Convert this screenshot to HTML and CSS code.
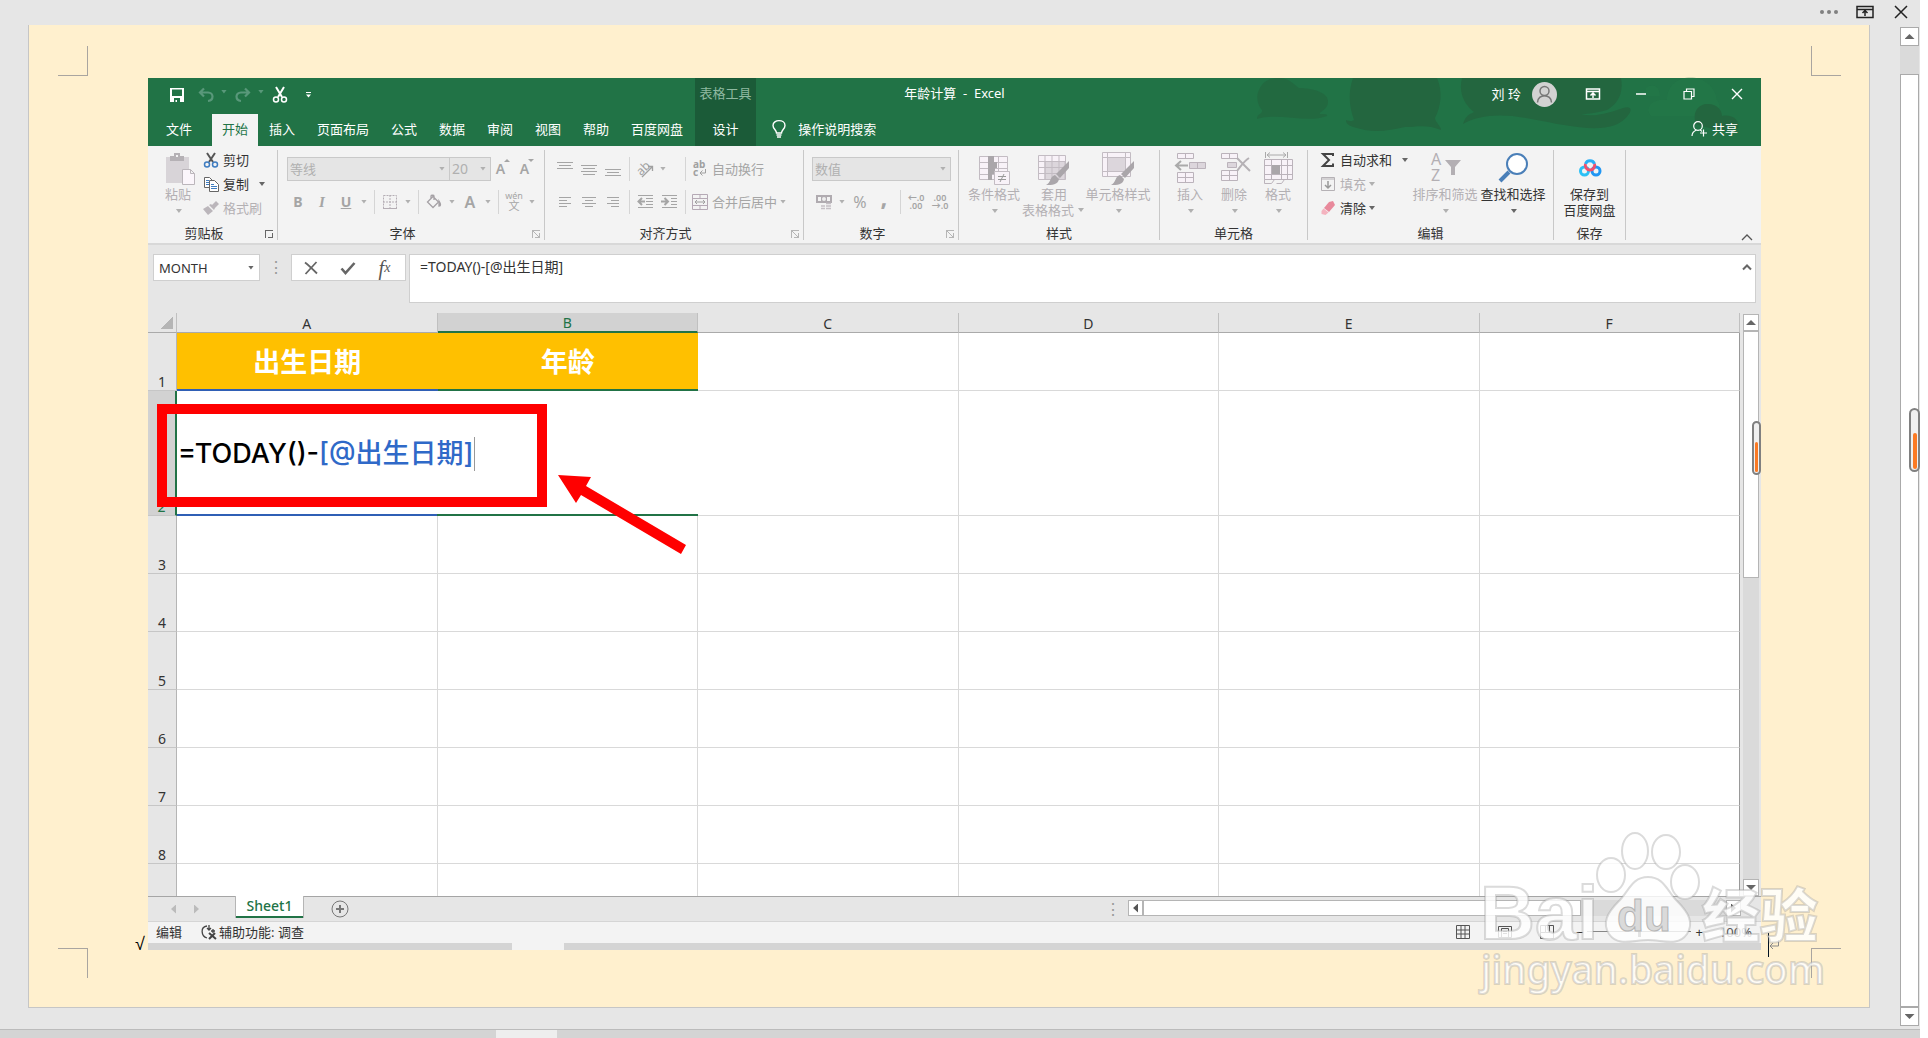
FILE: index.html
```
<!DOCTYPE html>
<html lang="zh-CN">
<head>
  <meta charset="UTF-8" />
  <meta name="viewport" content="width=device-width, initial-scale=1.0"/>
  <title>年龄计算 - Excel</title>
  <link rel="stylesheet" href="styles.css">
</head>
<body>
<div class="reader">

  <div class="reader-top">
    <button aria-label="更多"><svg width="20" height="20"><g fill="#808080"><circle cx="3" cy="10" r="2"/><circle cx="10" cy="10" r="2"/><circle cx="17" cy="10" r="2"/></g></svg></button>
    <button aria-label="功能区显示选项"><svg width="20" height="20" fill="none" stroke="#222" stroke-width="1.5"><path d="M2 4.5h16v11H2zM2 7.5h16M10 14V9M7.500 11L10 8.500l2.500 2.500"/></svg></button>
    <button aria-label="关闭"><svg width="20" height="20" stroke="#222" stroke-width="1.500"><path d="M4 4l12 12M16 4L4 16"/></svg></button>
  </div>

  <div class="reader-body">
    <div class="paper">
      <div class="marks left"><i class="mark tl"></i><i class="mark bl"></i></div>
      <div class="doc">
        <span class="check">√</span>

        <div class="excel">
          <header class="head">
            <svg class="clouds" width="520" height="68" viewBox="0 0 520 68">
              <g fill="#257b4b" opacity=".35"><path d="M426 22c0-30 46-30 50 0 8 12-4 20-16 16h-50c-8-10 4-18 16-16zM405 10c8-6 14 0 14 8h-14z"/></g>
              <g fill="#23663f">
                <path d="M18 12C22 2 30 0 38 0c10 0 14 6 20 10 12 0 30 4 29 14 0 8-10 10-8 12 4 0 8 0 7 2-20 8-48-4-70 3 0-5 6-5 5-9-5-6-6-14-3-20z" opacity=".75"/>
                <path d="M112 0h84c6 14 4 28-2 40 0 4 6 8 6 12-14-6-24-3-36-3-16 4-34 6-48 1-8-2-11-4-11-8 4 1 6 2 8 0-5-14-6-28-1-42z"/>
                <path d="M221 0h159c3 16-4 26-14 32-14 4-22 4-26 4 14 4 30-2 42-6 6-2 10 0 6 6-16 24-58 12-98 5-30-6-52-4-68 5 2-6 4-9 11-12-12-9-15-22-12-34z"/>
                <path d="M455 46c-4-12 2-20 12-20s14 7 14 12c10-2 18 4 16 12-12 6-30 0-42-4z"/>
              </g>
            </svg>

            <div class="titlebar">
              <div class="quick">
                <button class="first" aria-label="保存"><svg width="16" height="16"><path fill="#fff" fill-rule="evenodd" d="M1 1h14v14H1zM3 2.500h10V9H3zM5 11v4h1.500v-2H8v2h3v-4z"/></svg></button>
                <button aria-label="撤消"><svg width="16" height="16" fill="none" stroke="#59987a" stroke-width="2.200"><path d="M6 1.500L2 5.500l4 4M2.500 5.500H10c6 0 6 8 0 8.500"/></svg></button><i class="caret dim"></i>
                <button aria-label="恢复"><svg width="16" height="16" fill="none" stroke="#59987a" stroke-width="2.200"><path d="M10 1.500l4 4-4 4M13.500 5.500H6c-6 0-6 8 0 8.500"/></svg></button><i class="caret dim"></i>
                <button aria-label="剪切"><svg width="16" height="16" fill="none" stroke="#fff" stroke-width="1.500"><path stroke-width="2" d="M4 0l6 10M12 0L6 10"/><circle cx="4" cy="12.500" r="2.500"/><circle cx="12" cy="12.500" r="2.500"/></svg></button>
                <button class="more" aria-label="自定义"><svg width="8" height="8" fill="#fff"><path d="M2 1h5v1H2zM2 3.500h5L4.500 6.500z"/></svg></button>
              </div>
              <span class="context">表格工具</span>
              <span class="title">年龄计算&nbsp; -&nbsp; Excel</span>
              <div class="account">
                <span>刘 玲</span>
                <svg class="avatar" width="25" height="25" fill="none" stroke="#777" stroke-width="1.500"><circle cx="12.500" cy="12.500" r="12.500" fill="#d2d2d2" stroke="none"/><circle cx="12.500" cy="9" r="4.500"/><path d="M5.500 20.500c0-9 14-9 14 0"/></svg>
                <button class="win" aria-label="功能区"><svg width="16" height="16" fill="none" stroke="#fff" stroke-width="1.500"><path d="M1.500 3h13v10h-13zM1.500 5.500h13M8 12V7.500M5.500 9.500L8 7l2.500 2.500"/></svg></button>
                <button class="win" aria-label="最小化"><svg width="12" height="12"><path stroke="#fff" stroke-width="1.500" d="M1 6h10"/></svg></button>
                <button class="win" aria-label="还原"><svg width="12" height="12" fill="none" stroke="#fff" stroke-width="1.200"><path d="M1 3.500h7.500V11H1zM3.500 3.500V1H11v7.500H8.500"/></svg></button>
                <button class="win" aria-label="关闭"><svg width="12" height="12" stroke="#fff" stroke-width="1.400"><path d="M1 1l10 10M11 1L1 11"/></svg></button>
              </div>
            </div>

            <nav class="tabs">
              <button class="file">文件</button>
              <button class="active">开始</button>
              <button>插入</button>
              <button>页面布局</button>
              <button>公式</button>
              <button>数据</button>
              <button>审阅</button>
              <button>视图</button>
              <button>帮助</button>
              <button>百度网盘</button>
              <button class="design">设计</button>
              <button class="tell"><svg width="14" height="18" fill="none" stroke="#fff" stroke-width="1.400"><path d="M4.500 13c0-3-3.500-4-3.500-7.500C1-1 13-1 13 5.500 13 9 9.500 10 9.500 13zM4.500 15h5M5 17h4"/></svg>操作说明搜索</button>
              <button class="share"><svg width="17" height="16" fill="none" stroke="#fff" stroke-width="1.200"><circle cx="7" cy="5" r="4.300"/><path d="M1 15c0-3 2-5 4.500-6M9 9c1 .4 1.500 1 2 1.500M12.500 8.500v7M9 12h7"/></svg>共享</button>
            </nav>
          </header>

          <section class="ribbon">
            <div class="group">
              <div class="body clip">
                <button class="big off w44"><svg width="32" height="36"><path fill="#d8d4d8" d="M4 6h23v26H4z"/><path fill="#b5b1b5" d="M8 5h4V2h6v3h4v5H8zM14 4v2h2V4z"/><path fill="#fbf6fb" stroke="#bbb6bb" d="M20.500 18.500h8l4 4v11h-12zM28.500 18.500v4h4"/></svg>粘贴<i class="caret"></i></button>
                <div class="stack">
                  <button><svg width="16" height="16" fill="none" stroke="#3f7dc1" stroke-width="1.500"><path stroke="#555" stroke-width="2" d="M4 1l6 9M12 1L6 10"/><circle cx="4" cy="12.500" r="2.500"/><circle cx="12" cy="12.500" r="2.500"/></svg>剪切</button>
                  <button><svg width="16" height="16"><g fill="#fff" stroke="#666"><path d="M1.500 1.500h5l3 3v7h-8z"/><path d="M6.500 4.500h5l4 4v7h-9z"/></g><path stroke="#3f7dc1" d="M3 4.500h3M3 6.500h3M3 8.500h3M8 8.500h3M8 10.500h6M8 12.500h6"/></svg>复制<i class="caret gap"></i></button>
                  <button class="off"><svg width="16" height="16"><path fill="#bbb6bb" d="M13 1l3 3-4 4-3-3zM8 4l4 4-1 2-5-5zM5 6l5 5-5 4-5-6z"/></svg>格式刷</button>
                </div>
              </div>
              <div class="label"><span>剪贴板</span><button class="launch dark" aria-label="剪贴板设置"></button></div>
            </div>

            <div class="group">
              <div class="body rows">
                <div class="row">
                  <label class="combo font"><select aria-label="字体" disabled><option>等线</option></select></label>
                  <label class="combo size"><select aria-label="字号" disabled><option>20</option></select></label>
                  <button class="tool letter">A<svg width="6" height="16" fill="#a5a5a5"><path d="M0 4l3-3 3 3z"/></svg></button>
                  <button class="tool letter">A<svg width="6" height="16" fill="#a5a5a5"><path d="M0 1l3 3 3-3z"/></svg></button>
                </div>
                <div class="row">
                  <button class="tool"><b>B</b></button><button class="tool ital"><b>I</b></button><button class="tool"><b><u>U</u></b></button><i class="caret"></i><i class="bar"></i>
                  <button class="tool" aria-label="边框"><svg width="16" height="16" fill="none" stroke="#b5aeb5"><path stroke-dasharray="2 1" d="M1.500 1.500h13v13h-13zM8 1v14M1 8h14"/><path d="M1 14.500h14"/></svg></button><i class="caret"></i><i class="bar"></i>
                  <button class="tool" aria-label="填充颜色"><svg width="16" height="16" fill="none" stroke="#a5a1a5" stroke-width="1.300"><path d="M7 2.500l5.500 5.500L7 13.500 1.500 8zM5 5V2c0-1 3-1 3 0v4"/><path fill="#a5a1a5" d="M13 7c2 3 2 5 0 5z"/></svg></button><i class="caret"></i>
                  <button class="tool color">A</button><i class="caret"></i><i class="bar"></i>
                  <button class="tool wen"><span>wén</span>文</button><i class="caret"></i>
                </div>
              </div>
              <div class="label"><span>字体</span><button class="launch" aria-label="字体设置"></button></div>
            </div>

            <div class="group">
              <div class="body rows">
                <div class="row">
                  <button class="tool" aria-label="顶端对齐"><svg width="16" height="16" stroke="#a5a5a5"><path d="M0 1.500h16M2 4.500h12M0 7.500h16"/></svg></button>
                  <button class="tool" aria-label="垂直居中"><svg width="16" height="16" stroke="#a5a5a5"><path d="M0 4.500h16M2 7.500h12M0 10.500h16M2 13.500h12"/></svg></button>
                  <button class="tool" aria-label="底端对齐"><svg width="16" height="16" stroke="#a5a5a5"><path d="M0 8.500h16M2 11.500h12M0 14.500h16"/></svg></button><i class="bar"></i>
                  <button class="tool" aria-label="方向"><svg width="18" height="18"><text x="1" y="13" font-size="12" fill="#a0a0a0" font-family="Noto Sans" transform="rotate(-45 7 10)">ab</text><path fill="none" stroke="#a0a0a0" stroke-width="1.300" d="M6 17L16 7M12 6.500h4.500V11"/></svg></button><i class="caret"></i><i class="hole"></i><i class="bar"></i>
                  <button class="wide"><svg width="16" height="18" fill="#a0a0a0"><text x="1" y="8" font-size="10" font-weight="700" font-family="Noto Sans">ab</text><text x="1" y="16" font-size="10" font-weight="700" font-family="Noto Sans">c</text><path fill="none" stroke="#a0a0a0" d="M13.500 9v4H8M10.500 10.500L8 13l2.500 2.500"/></svg>自动换行</button>
                </div>
                <div class="row">
                  <button class="tool" aria-label="左对齐"><svg width="16" height="16" stroke="#a5a5a5"><path d="M2 3.500h12M2 6.500h8M2 9.500h12M2 12.500h8"/></svg></button>
                  <button class="tool" aria-label="居中"><svg width="16" height="16" stroke="#a5a5a5"><path d="M1 3.500h14M4 6.500h8M1 9.500h14M4 12.500h8"/></svg></button>
                  <button class="tool" aria-label="右对齐"><svg width="16" height="16" stroke="#a5a5a5"><path d="M2 3.500h12M6 6.500h8M2 9.500h12M6 12.500h8"/></svg></button><i class="bar"></i>
                  <button class="tool" aria-label="减少缩进"><svg width="16" height="16" stroke="#a5a5a5" fill="none"><path d="M1 1.500h15M9 4.500h7M9 7.500h7M9 10.500h7M1 13.500h15"/><path stroke-width="2" d="M8 7.500H2M5 4L1.500 7.500 5 11"/></svg></button>
                  <button class="tool" aria-label="增加缩进"><svg width="16" height="16" stroke="#a5a5a5" fill="none"><path d="M1 1.500h15M10 4.500h6M10 7.500h6M10 10.500h6M1 13.500h15"/><path stroke-width="2" d="M0 7.500h6M3.500 4L7 7.500 3.500 11"/></svg></button><i class="bar"></i>
                  <button class="wide"><svg width="16" height="16" stroke="#b5a9b5" fill="none"><path d="M.5.500h15v15H.5zM.5 4.500h15M.5 11.500h15M8 .5v4M8 11.500v4"/><path stroke="#a0a0a0" d="M3 8h10M5 6L3 8l2 2M11 6l2 2-2 2"/></svg>合并后居中</button><i class="caret"></i>
                </div>
              </div>
              <div class="label"><span>对齐方式</span><button class="launch" aria-label="对齐设置"></button></div>
            </div>

            <div class="group">
              <div class="body rows">
                <div class="row"><label class="combo num"><select aria-label="数字格式" disabled><option>数值</option></select></label></div>
                <div class="row">
                  <button class="tool" aria-label="会计数字格式"><svg width="18" height="16"><path fill="#b0abb0" fill-rule="evenodd" d="M1 1h16v8H1zM3 3v4h3V3zM12 3v4h3V3z"/><circle cx="9" cy="5" r="2" fill="#eee"/><path stroke="#c5c0c5" stroke-width="1.500" d="M11 9.500h5M11 12h5M11 14.500h5M6 12h4M6 14.500h4"/></svg></button><i class="caret"></i>
                  <button class="tool pct">%</button><button class="tool comma"><b>,</b></button><i class="bar"></i>
                  <button class="tool dec"><span>←.0</span><span>.00</span></button>
                  <button class="tool dec"><span>.00</span><span>→.0</span></button>
                </div>
              </div>
              <div class="label"><span>数字</span><button class="launch" aria-label="数字设置"></button></div>
            </div>

            <div class="group">
              <div class="body bigs">
                <button class="big off w62"><svg width="32" height="36" fill="#f8f2f8" stroke="#c3bcc3"><path d="M1.500 5.500h28v23h-28zM1.500 11.500h28M1.500 17.500h28M1.500 23.500h28M10.500 5.500v23M20.500 5.500v23"/><path fill="#aaa6aa" stroke="none" d="M10 5h6v6h-6zM10 11h9v6h-9zM10 17h7v6h-7zM10 23h4v6h-4z"/><path d="M16.500 20.500h15v13h-15z"/><path stroke="#999" d="M20 25.500h8M20 28.500h8M26 23l-4 8"/></svg>条件格式<i class="caret"></i></button>
                <button class="big off w58"><svg width="32" height="36" fill="#f8f2f8" stroke="#c3bcc3"><path d="M.5 4.500h27v24H.5z"/><path fill="#dcd6dc" d="M7 10.500h20v18H7z"/><path d="M.5 10.500h27M.5 16.500h27M.5 22.500h27M7 4.500v24M14 4.500v24M21 4.500v24" fill="none"/><path fill="#aaa6aa" stroke="none" d="M31 10v7l-9 10-4-4zM17 24l4 4c-1 6-7 6-13 6 5-2 4-9 9-10z"/></svg>套用<span>表格格式<i class="caret"></i></span></button>
                <button class="big off w70"><svg width="32" height="36" fill="#f8f2f8" stroke="#c3bcc3"><path d="M.5 1.500h28v24H.5zM.5 6.500h28M.5 20.500h28M5.500 1.500v24M23.500 1.500v24"/><path fill="#dcd6dc" d="M5.500 6.500h18v14h-18z"/><path fill="#aaa6aa" stroke="none" d="M32 10v7l-9 10-4-4zM18 24l4 4c-1 6-7 6-13 6 5-2 4-9 9-10z"/></svg>单元格样式<i class="caret"></i></button>
              </div>
              <div class="label"><span>样式</span></div>
            </div>

            <div class="group">
              <div class="body cells">
                <button class="big off w44"><svg width="32" height="36" fill="#f8f2f8" stroke="#bbb3bb"><path d="M3.500 2.500h16v5h-16zM11.500 2.500v5M3.500 21.500h16v10h-16zM3.500 26.500h16M11.500 21.500v10"/><path fill="#dcd6dc" d="M15.500 11.500h16v6h-16zM23.500 11.500v6"/><path fill="none" stroke="#aaa" stroke-width="2" d="M14 14.500H3M7 10l-5 4.500L7 19"/></svg>插入<i class="caret"></i></button>
                <button class="big off w44"><svg width="32" height="36" fill="#f8f2f8" stroke="#bbb3bb"><path d="M3.500 2.500h16v5h-16zM11.500 2.500v5M3.500 19.500h16v10h-16zM3.500 24.500h16M11.500 19.500v10"/><path fill="#dcd6dc" d="M9.500 11.500h9v5h-9z"/><path fill="none" stroke="#b5b1b5" stroke-width="2" d="M19 7l13 13M31 7c-5 3-8 8-12 13"/></svg>删除<i class="caret"></i></button>
                <button class="big off w44"><svg width="32" height="36" fill="#f8f2f8" stroke="#bbb3bb"><path d="M2.500 8.500h28v20h-28zM2.500 14.500h28M2.500 23.500h28M9.500 8.500v20M19.500 8.500v20M25.500 8.500v20"/><path fill="none" d="M2.500 28.500v4h7l3-4M14.500 32.500h5l3-4"/><path fill="#aaa6aa" stroke="none" d="M10 14h8v9h-8z"/><path fill="none" stroke="#aaa" d="M3.500 1v6M25.500 1v6M5 4h19M8 1.500L5 4l3 2.500M21 1.500L24 4l-3 2.500"/></svg>格式<i class="caret"></i></button>
              </div>
              <div class="label"><span>单元格</span></div>
            </div>

            <div class="group">
              <div class="body edit">
                <div class="stack">
                  <button><svg width="16" height="16" fill="none" stroke="#444" stroke-width="2"><path d="M13 4V2H3l6 6-6 6h10v-2.500"/></svg>自动求和<i class="caret gap"></i></button>
                  <button class="off"><svg width="16" height="16" fill="none" stroke="#b5b1b5"><path d="M1.500 1.500h13v13h-13zM1 3h14"/><path stroke="#999" stroke-width="1.500" d="M8 5v7M5 9l3 3 3-3"/></svg>填充<i class="caret"></i></button>
                  <button><svg width="16" height="16"><path fill="#e8899b" d="M9 2l4-1 2 4-6 7-5-4z"/><path fill="#f4b3bf" d="M3.500 8.500l5 4-3 2.500-4-1v-3z"/></svg>清除<i class="caret"></i></button>
                </div>
                <button class="big off w68"><svg width="32" height="36"><g fill="#b3afb3" font-size="16" font-family="Noto Sans"><text x="2" y="14">A</text><text x="2" y="30">Z</text></g><path fill="#b3afb3" d="M16 9h16l-6 7v8h-4v-8z"/></svg>排序和筛选<i class="caret"></i></button>
                <button class="big w68"><svg width="32" height="36"><path stroke="#4a7fb8" stroke-width="4" d="M3 30l9-9"/><circle cx="20" cy="13" r="10" fill="#fff" stroke="#4a7fb8" stroke-width="2"/></svg>查找和选择<i class="caret"></i></button>
              </div>
              <div class="label"><span>编辑</span></div>
            </div>

            <div class="group">
              <div class="body save">
                <button class="big w68"><svg width="32" height="36" fill="none" stroke-width="3"><circle cx="10.500" cy="20" r="4" stroke="#2bc0f5"/><circle cx="22" cy="20" r="4" stroke="#2196f3"/><path stroke="#29aef6" d="M11.500 13a4.700 4.700 0 0 1 9 0"/><path stroke="#f0506e" d="M11.500 13a4.700 4.700 0 1 0 9 0"/></svg>保存到<span>百度网盘</span></button>
              </div>
              <div class="label"><span>保存</span></div>
            </div>
            <button class="collapse" aria-label="折叠功能区"><svg width="12" height="8" fill="none" stroke="#555" stroke-width="1.300"><path d="M1 7l5-5 5 5"/></svg></button>
          </section>

          <section class="formula">
            <div class="namebox"><input aria-label="名称框" value="MONTH"><i class="caret"></i></div>
            <span class="grip">⋮</span>
            <div class="fx">
              <button aria-label="取消"><svg width="14" height="14" fill="none" stroke="#666" stroke-width="1.800"><path d="M1 1.500c4 3 8 7 12 11M12.500 1L1.500 13"/></svg></button>
              <button aria-label="输入"><svg width="16" height="14" fill="none" stroke="#666" stroke-width="2.600"><path d="M1.500 7.500l4 4.500L14.500 2"/></svg></button>
              <button class="fn" aria-label="插入函数">f<small>x</small></button>
            </div>
            <div class="fbar"><input aria-label="编辑栏" value="=TODAY()-[@出生日期]"><button aria-label="折叠编辑栏"><svg width="10" height="8" fill="none" stroke="#666" stroke-width="2"><path d="M1 6.500l4-4 4 4"/></svg></button></div>
          </section>

          <section class="sheet">
            <div class="grid">
            <table>
              <colgroup><col class="nums"><col><col><col><col><col><col></colgroup>
              <thead>
                <tr><th class="corner"></th><th>A</th><th class="sel">B</th><th>C</th><th>D</th><th>E</th><th>F</th></tr>
              </thead>
              <tbody>
                <tr><th>1</th><td class="gold">出生日期</td><td class="gold b1">年龄</td><td></td><td></td><td></td><td></td></tr>
                <tr class="tall"><th class="sel">2</th><td class="editing" colspan="2"><div class="editor" contenteditable="true" spellcheck="false">=TODAY()-<span>[@出生日期]</span></div></td><td></td><td></td><td></td><td></td></tr>
                <tr><th>3</th><td></td><td></td><td></td><td></td><td></td><td></td></tr>
                <tr><th>4</th><td></td><td></td><td></td><td></td><td></td><td></td></tr>
                <tr><th>5</th><td></td><td></td><td></td><td></td><td></td><td></td></tr>
                <tr><th>6</th><td></td><td></td><td></td><td></td><td></td><td></td></tr>
                <tr><th>7</th><td></td><td></td><td></td><td></td><td></td><td></td></tr>
                <tr><th>8</th><td></td><td></td><td></td><td></td><td></td><td></td></tr>
                <tr class="cut"><th></th><td></td><td></td><td></td><td></td><td></td><td></td></tr>
              </tbody>
            </table>
            </div>
            <div class="vscroll"><button aria-label="向上"><i class="up"></i></button><div class="thumb"></div><div class="track"></div><button aria-label="向下"><i class="down"></i></button></div>
          </section>

          <section class="sheetbar">
            <div class="nav"><i class="arr prev"></i><i class="arr next"></i></div>
            <button class="tab">Sheet1</button>
            <button class="add" aria-label="新工作表"><svg width="18" height="18" fill="none" stroke="#777"><circle cx="9" cy="9" r="8"/><path stroke-width="2" d="M9 5v8M5 9h8"/></svg></button>
            <span class="grip">⋮</span>
            <div class="hscroll"><button aria-label="向左"><i class="arr prev"></i></button><div class="thumb"></div><div class="track"></div><button aria-label="向右"><i class="arr next"></i></button></div>
          </section>

          <footer class="status">
            <span>编辑</span>
            <span class="access"><svg width="16" height="16" fill="none" stroke="#444" stroke-width="1.300"><path d="M6 2C-1 3 0 12 6 14"/><path d="M8 1v5M6 4l2 2 2-2M12 5v4M10 7h4"/><path stroke-width="2" d="M8 9l7 6M14 9l-6 6"/></svg>辅助功能: 调查</span>
            <div class="views">
              <button aria-label="普通"><svg width="14" height="14" fill="none" stroke="#555"><path d="M.5.500h13v13H.5zM.5 5h13M.5 9h13M5 .5v13M9 .5v13"/></svg></button>
              <button aria-label="页面布局"><svg width="14" height="14" fill="none" stroke="#555"><path d="M.5 1.500h13v11H.5zM3.500 3.500h7v9M3.500 3.500v9M5 6.500h4M5 8.500h4"/></svg></button>
              <button aria-label="分页预览"><svg width="14" height="14" fill="none" stroke="#555"><path d="M.5.500h13v13H.5zM5.500.500v7h-5M5.500 7.500h4v-7"/></svg></button>
              <label class="zoom"><span>−</span><input type="range" aria-label="缩放"><span>+</span></label>
              <span>100%</span>
            </div>
          </footer>
          <div class="strip"><i></i></div>

          <div class="redbox"></div>
          <svg class="arrow" width="130" height="82" viewBox="558 474 130 82"><path fill="#f00" d="M558 475l33 2-5 9 100 59-5 9-100-59-5 8z"/></svg>
          <div class="handle small"><i></i></div>
        </div>

        <div class="caretmark"><i></i><svg width="10" height="12" fill="none" stroke="#888"><path d="M9.500 1v6H1M4 4L1 7l3 3"/></svg></div>
      </div>
      <div class="marks right"><i class="mark tr"></i><i class="mark br"></i></div>
    </div>

    <div class="pagescroll"><button aria-label="向上"><i class="up"></i></button><div class="track"></div><div class="thumb"></div><button aria-label="向下"><i class="down"></i></button></div>
    <div class="handle large"><i></i></div>
  </div>

  <div class="reader-foot"><i></i></div>

  <svg class="watermark" width="350" height="170" viewBox="0 0 350 170">
    <g class="outline">
      <text x="0" y="109" class="bai">Bai</text>
      <ellipse cx="131" cy="45" rx="14" ry="17"/><ellipse cx="155" cy="21" rx="13" ry="18"/><ellipse cx="186" cy="22" rx="14" ry="17"/><ellipse cx="205" cy="52" rx="14" ry="17"/>
      <path d="M168 47c16 0 19 14 29 24 12 12 17 22 10 33-9 13-24 6-39 6s-30 7-39-6c-7-11-2-21 10-33 10-10 13-24 29-24z"/>
      <text x="222" y="107" class="jy">经验</text>
      <text x="1" y="154" class="url">jingyan.baidu.com</text>
    </g>
    <text x="137" y="101" class="du">du</text>
  </svg>
</div>
</body>
</html>
```
FILE: styles.css
```
*{margin:0;padding:0;box-sizing:border-box}
body{background:#fff;padding-right:8px;font:13px/16px "Noto Sans","Noto Sans CJK SC",sans-serif;color:#333}
button{font:inherit;color:inherit;background:none;border:none;white-space:nowrap;display:flex;align-items:center;justify-content:center}
input,select{font:inherit;color:inherit;border:none;background:none;outline:none;min-width:0}
svg,i{flex:none;display:block}
svg{overflow:visible}

/* reader frame */
.reader{position:relative;min-height:100vh;background:#e6e6e6;display:flex;flex-direction:column;overflow:hidden}
.reader-top{height:25px;display:flex;justify-content:flex-end;gap:16px;padding:0 9px 2px 0}
.reader-body{position:relative;flex:1;display:flex}
.reader-foot{height:9px;border-top:1px solid #bbb;background:#d4d4d4;padding-left:496px}
.reader-foot i{width:61px;height:8px;background:#eee}
.paper{flex:1;min-width:0;margin:0 30px 21px 28px;border:1px solid #c6c6c6;border-top:none;background:#fff0ce;display:flex;padding:21px 28px 29px 29px}
.marks{width:30px;display:flex;flex-direction:column;justify-content:space-between}
.mark{width:30px;height:30px;border:0 solid #a9a5a0}
.tl{border-width:0 1px 1px 0}
.bl{border-width:1px 1px 0 0}
.tr{border-width:0 0 1px 1px}
.br{border-width:1px 0 0 1px}
.doc{flex:1;min-width:0;display:flex;align-items:flex-end;padding:32px 0 28px}
.check{width:60px;padding-right:3px;text-align:right;font-family:"Liberation Sans",sans-serif;font-size:18px;line-height:12px;color:#000}
.caretmark{width:50px;padding-left:7px;display:flex;align-items:center;height:10px}
.caretmark i{width:1px;height:24px;background:#012}

.pagescroll{width:19px;margin:2px 1px 3px 0;display:flex;flex-direction:column}
.pagescroll button{height:19px;background:#fff;border:1px solid #aaa}
.pagescroll .track{height:28px;background:#dadada}
.pagescroll .thumb{flex:1;background:#fff;border:1px solid #aaa}
.handle{position:absolute;border:2px solid #808080;border-radius:6px;background:#f0f0f0;display:flex;align-items:flex-end;justify-content:center;padding-bottom:1px}
.handle i{width:4px;background:#fb7a24;border-radius:2px}
.large{right:0;top:383px;width:11px;height:64px}
.large i{height:36px}
.small{right:0;top:343px;width:9px;height:54px}
.small i{width:3px;height:30px}

/* green header */
.excel{position:relative;flex:1;min-width:0;background:#e6e6e6}
.head{position:relative;background:#217346;color:#fff}
.clouds{position:absolute;right:0;top:0}
.titlebar{position:relative;display:grid;grid-template-columns:547px 61px 1fr auto;height:36px;line-height:30px}
.titlebar>*{grid-row:1}
.quick{grid-column:1;display:flex;align-items:center;padding:0 0 3px 19px}
.quick button{width:20px}
.quick .first{margin-right:9px}
.quick .caret{margin:0 4px 6px 1px;width:12px}
.quick .more{width:36px}
.context{grid-column:2;background:#1b5b38;color:#8fb9a1;text-align:center}
.title{grid-column:1/-1;justify-self:center}
.account{grid-column:4;display:flex;align-items:center;padding-bottom:4px}
.avatar{margin:0 12px 0 11px}
.win{width:48px}
.tabs{position:relative;display:flex;height:32px}
.tabs button{padding:0 11px 3px}
.tabs .file{width:64px;padding:0 13px 3px 11px}
.tabs .active{background:#f3f3f3;color:#217346;width:46px}
.tabs .design{background:#1b5b38;width:61px;margin-left:auto}
.tabs .design{margin-left:1px}
.tabs .tell{gap:12px;padding-left:16px}
.tabs .share{margin-left:auto;gap:4px;padding-right:23px}

/* ribbon */
.caret{width:12px;height:4px;background:#666;clip-path:polygon(33% 0,83% 0,58% 100%)}
.caret.dim{background:#59987a}
.off .caret,.row .caret{background:#b0b0b0}
.off{color:#b3b0b3}
.ribbon{display:flex;height:99px;background:#f3f3f3;border-bottom:2px solid #d8d8d8;padding-top:2px}
.group{display:flex;flex-direction:column;padding-right:1px;background:linear-gradient(#c8c8c8,#c8c8c8) right 2px/1px 90px no-repeat}
.body{height:76px;display:flex}
.group:nth-child(1){width:130px}
.group:nth-child(2){width:267px}
.group:nth-child(3){width:259px}
.group:nth-child(4){width:155px}
.group:nth-child(5){width:201px}
.group:nth-child(6){width:148px}
.group:nth-child(7){width:246px}
.group:nth-child(8){width:72px}
.label{display:flex;align-items:center;height:18px}
.label span{flex:1;text-align:center}
.launch{width:8px;height:8px;margin:2px 4px 0 5px;border:1px solid #b5b5b5;border-width:1px 0 0 1px;background:linear-gradient(#b5b5b5,#b5b5b5) right bottom/5px 1px no-repeat,linear-gradient(#b5b5b5,#b5b5b5) right bottom/1px 5px no-repeat,linear-gradient(45deg,transparent 44%,#b5b5b5 44%,#b5b5b5 56%,transparent 56%)}
.launch.dark{border-color:#666;background:linear-gradient(#666,#666) right bottom/5px 1px no-repeat,linear-gradient(#666,#666) right bottom/1px 5px no-repeat}
.clip{padding-left:8px}
.clip .stack{padding-left:3px}
.stack button{height:24px;gap:4px}
.stack{display:flex;flex-direction:column;align-items:flex-start}
.stack .caret{margin-left:-5px}
.stack .caret.gap{margin-left:2px}
.big{flex-direction:column;justify-content:flex-start;padding-top:3px}
.big svg{margin-bottom:-1px}
.big span{display:flex;align-items:center}
.big>.caret{margin-top:7px}
.w44{width:44px}
.w58{width:58px}
.w62{width:62px}
.w68{width:68px}
.w70{width:70px}
.bigs{padding-left:4px}
.cells{padding-left:8px}
.edit{padding-left:12px}
.edit .stack{width:91px}
.save{justify-content:center}
.rows{flex-direction:column;padding:4px 0 0 8px}
.row{display:flex;align-items:center;height:33px;color:#a5a5a5}
.row .caret{margin-left:-1px;margin-right:1px}
.combo{position:relative;display:flex;align-items:center;height:24px;border:1px solid #c9c9c9;background:#e5e5e5}
.combo select{appearance:none;flex:1;padding-left:2px;opacity:1;color:#b0b0b0}
.combo::after{content:"";width:12px;height:4px;margin-right:2px;background:#b0b0b0;clip-path:polygon(33% 0,83% 0,58% 100%)}
.font{width:163px;margin-left:1px}
.size{width:42px;margin-left:-1px;font-size:14px}
.num{width:139px}
.tool{width:24px;height:24px;font-size:14px}
.letter{font-weight:600}
.letter svg{margin:0 0 5px -1px}
.ital{font-family:"Liberation Serif",serif;font-style:italic;font-size:15px}
.color{font-size:16px;font-weight:600}
.wen{flex-direction:column;font-size:11px;line-height:11px}
.wen span{font-size:9px;line-height:8px}
.pct{font-size:16px}
.comma{font-size:24px;padding-bottom:10px}
.dec{flex-direction:column;font-size:9px;line-height:8px;font-weight:600}
.bar{width:8px;height:24px;background:linear-gradient(#d5d5d5,#d5d5d5) center/1px 100% no-repeat}
.hole{width:12px}
.wide{gap:4px;padding-left:3px}
.collapse{margin:auto 8px 2px auto}

/* formula bar */
.formula{display:flex;align-items:flex-start;padding:9px 5px 10px}
.namebox,.fx,.fbar{display:flex;background:#fff;border:1px solid #cfcfcf}
.namebox{width:107px;height:27px;align-items:center}
.namebox input{flex:1;padding-left:5px}
.namebox .caret{margin-right:3px}
.grip{width:31px;text-align:center;line-height:27px;color:#999;font-size:16px}
.fx{width:115px;height:27px}
.fx button{width:37px}
.fx .fn{font:italic 20px/20px "Liberation Serif",serif;color:#555}
.fn small{font-size:14px}
.fbar{flex:1;height:49px;margin-left:3px;align-items:flex-start;padding:4px 3px 0 10px}
.fbar input{flex:1;font-size:14px;line-height:16px}
.fbar button{height:16px}

/* grid */
.sheet{display:flex}
.grid{flex:1;min-width:0}
table{width:100%;table-layout:fixed;border-collapse:separate;border-spacing:0}
.nums{width:29px}
thead th{height:19px;font-weight:400;font-size:14px;line-height:16px;border-bottom:1px solid #aaa;border-right:1px solid #c0c0c0;padding-top:2px}
thead .corner{background:linear-gradient(135deg,transparent 50%,#b5b5b5 50%) 13px 4px/12px 12px no-repeat}
.sel{background:#d2d2d2;color:#217346}
thead .sel{border-bottom:2px solid #217346}
tbody th{height:58px;font-weight:400;font-size:14px;line-height:16px;vertical-align:bottom;border-bottom:1px solid #c6c6c6;border-right:1px solid #b5b5b5}
td{background:#fff;border-right:1px solid #d9d9d9;border-bottom:1px solid #d9d9d9}
td:last-child{border-right-color:#999}
.gold{background:#ffc000;color:#fff;font-weight:700;font-size:27px;line-height:32px;text-align:center;border-right:none;border-bottom:2px solid #2f5fb5;padding-top:2px}
.gold.b1{border-bottom-color:#217346}
.tall th{height:125px;border-right:2px solid #217346}
.editing{border-right:none;border-bottom:2px solid;border-image:linear-gradient(90deg,#2f5fb5 50%,#217346 50%) 2;padding-top:2px}
.editor{display:inline-block;margin-left:1px;border-right:1px solid #999;font-family:Inter,"Noto Sans CJK SC",sans-serif;font-size:27px;line-height:34px;font-weight:500;color:#000;white-space:nowrap;outline:none}
.editor span{color:#2f69c8}
.cut th,.cut td{height:32px;border-bottom:none}
.vscroll{width:16px;margin:1px 2px 0 3px;display:flex;flex-direction:column;background:#dadada}
.vscroll button,.hscroll button{background:#fff;border:1px solid #b5b5b5}
.vscroll button{height:17px}
.vscroll .thumb{height:247px;background:#fff;border:1px solid #b5b5b5}
.vscroll .track{flex:1}
.up,.down{width:10px;height:5px;background:#666;clip-path:polygon(0 100%,50% 0,100% 100%)}
.down{clip-path:polygon(0 0,100% 0,50% 100%)}

/* sheet tabs, status */
.sheetbar{display:flex;height:25px;border-top:1px solid #a5a5a5}
.nav{width:87px;display:flex;align-items:center;gap:18px;padding-left:23px}
.arr{width:5px;height:9px;background:#bbb}
.prev{clip-path:polygon(100% 0,0 50%,100% 100%)}
.next{clip-path:polygon(0 0,100% 50%,0 100%)}
.tab{width:69px;height:22px;margin-top:-1px;padding-bottom:3px;background:#fff;border:1px solid #b5b5b5;border-width:0 1px;box-shadow:inset 0 -2px #217346;color:#217346;font-size:14px;font-weight:500}
.add{margin-left:27px}
.sheetbar .grip{margin-left:auto;width:30px;line-height:24px}
.hscroll{width:38%;height:16px;margin:3px 20px 0 0;display:flex;background:#dadada}
.hscroll button{width:15px}
.hscroll .arr{background:#555}
.hscroll .thumb{flex:3;background:#fff;border:1px solid #b5b5b5}
.hscroll .track{flex:1}
.status{display:flex;align-items:center;height:22px;background:#f3f3f3;border-top:1px solid #d5d5d5;padding:0 9px 2px 8px}
.access{display:flex;align-items:center;gap:2px;margin-left:19px}
.views{display:flex;align-items:center;gap:28px;margin-left:auto}
.views>span{margin-left:-12px;color:#555}
.zoom{display:flex;align-items:center;gap:4px;margin-left:-6px}
.zoom input{appearance:none;width:104px;height:1px;background:#888}
.zoom input::-webkit-slider-thumb{appearance:none;width:3px;height:10px;background:#666}
.strip{height:7px;background:#d4d4d4;padding-left:364px}
.strip i{width:52px;height:7px;background:#f3f3f3}

/* annotations */
.redbox{position:absolute;left:9px;top:326px;width:390px;height:103px;border:10px solid #f00}
.arrow{position:absolute;left:410px;top:396px}
.watermark{position:absolute;right:90px;bottom:38px;pointer-events:none}
.outline{fill:#fff;fill-opacity:.82;stroke:#999;stroke-opacity:.35;stroke-width:2}
.bai{font:700 76px "Liberation Sans",sans-serif}
.jy{font:900 58px "Noto Sans CJK SC",sans-serif}
.url{font:500 39px "Noto Sans",sans-serif}
.du{font:700 44px "Liberation Sans",sans-serif;fill:#dadada;stroke:#b5b5b5}
```
